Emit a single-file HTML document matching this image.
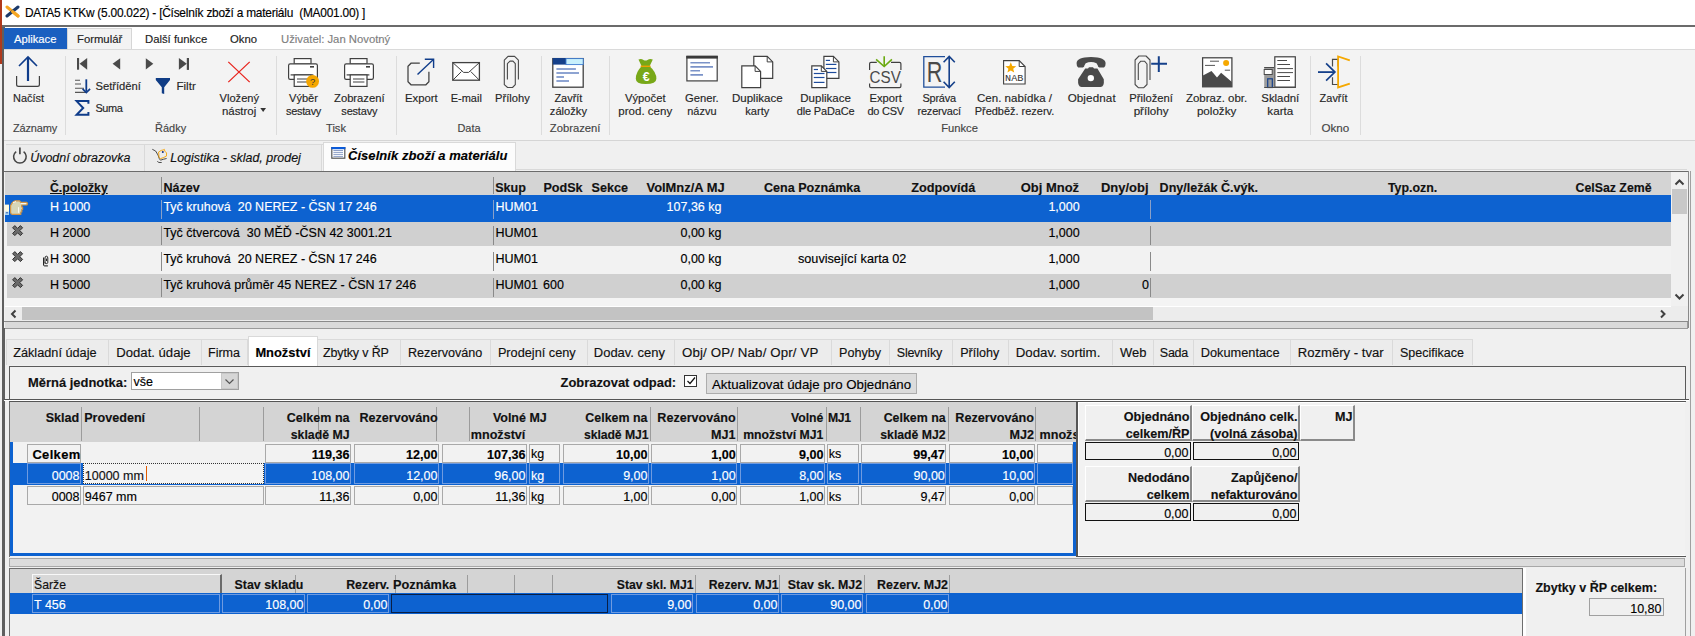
<!DOCTYPE html>
<html><head><meta charset="utf-8"><style>
html,body{margin:0;padding:0;}
body{width:1695px;height:636px;overflow:hidden;position:relative;background:#f0f0f0;font-family:"Liberation Sans",sans-serif;}
.a{position:absolute;}
.t{position:absolute;white-space:pre;-webkit-text-stroke:0.15px currentColor;}
</style></head><body>
<div class="a" style="left:0px;top:0px;width:1695px;height:25px;background:#ffffff;"></div>
<div class="a" style="left:0px;top:0px;width:2px;height:64px;background:#b0391c;"></div>
<div class="t" style="top:3px;font-size:11.9px;line-height:20px;color:#000;left:25px;letter-spacing:-0.230px;">DATA5 KTKw (5.00.022) - [Číselník zboží a materiálu  (MA001.00) ]</div>
<svg class="a" style="left:5px;top:5px" width="15" height="13" viewBox="0 0 15 13"><path d="M2 2 L13 11" stroke="#f5a623" stroke-width="3" stroke-linecap="round"/><path d="M13 2 L2 11" stroke="#1b3a6b" stroke-width="3" stroke-linecap="round"/><path d="M7.5 6.5 L13 11" stroke="#f5a623" stroke-width="3" stroke-linecap="round"/></svg>
<div class="a" style="left:2px;top:25px;width:1693px;height:2px;background:#6b6b6b;"></div>
<div class="a" style="left:2px;top:27px;width:1693px;height:22px;background:#ffffff;"></div>
<div class="a" style="left:2px;top:27px;width:3px;height:609px;background:#5f5f5f;"></div>
<div class="a" style="left:4px;top:28px;width:63px;height:21px;background:#1a5fc0;"></div>
<div class="t" style="top:29px;font-size:11.22px;line-height:20px;color:#ffffff;left:14px;">Aplikace</div>
<div class="a" style="left:67px;top:28px;width:65px;height:22px;background:#f3f3f3;border:1px solid #d6d6d6;border-bottom:none;box-sizing:border-box;"></div>
<div class="t" style="top:29px;font-size:11.3px;line-height:20px;color:#222;left:77px;">Formulář</div>
<div class="t" style="top:29px;font-size:11.3px;line-height:20px;color:#222;left:145px;">Další funkce</div>
<div class="t" style="top:29px;font-size:11.3px;line-height:20px;color:#222;left:230px;">Okno</div>
<div class="t" style="top:29px;font-size:11.3px;line-height:20px;color:#808080;left:281px;">Uživatel: Jan Novotný</div>
<div class="a" style="left:4px;top:49px;width:1691px;height:91px;background:#f3f3f3;"></div>
<div class="a" style="left:4px;top:49px;width:1691px;height:1px;background:#dadada;"></div>
<div class="a" style="left:4px;top:140px;width:1691px;height:1px;background:#d5d5d5;"></div>
<div class="a" style="left:65px;top:56px;width:1px;height:79px;background:#dcdcdc;"></div>
<div class="a" style="left:276px;top:56px;width:1px;height:79px;background:#dcdcdc;"></div>
<div class="a" style="left:396px;top:56px;width:1px;height:79px;background:#dcdcdc;"></div>
<div class="a" style="left:541px;top:56px;width:1px;height:79px;background:#dcdcdc;"></div>
<div class="a" style="left:609px;top:56px;width:1px;height:79px;background:#dcdcdc;"></div>
<div class="a" style="left:1310px;top:56px;width:1px;height:79px;background:#dcdcdc;"></div>
<div class="a" style="left:1360px;top:56px;width:1px;height:79px;background:#dcdcdc;"></div>
<div class="t" style="top:88px;font-size:10.96px;line-height:20px;color:#262626;left:-571.5px;width:1200px;text-align:center;">Načíst</div>
<div class="t" style="top:118px;font-size:10.96px;line-height:20px;color:#444;left:-565px;width:1200px;text-align:center;letter-spacing:-0.152px;">Záznamy</div>
<div class="t" style="top:76px;font-size:11.24px;line-height:20px;color:#262626;left:95.4px;">Setřídění</div>
<div class="t" style="top:98px;font-size:10.96px;line-height:20px;color:#262626;left:95.4px;letter-spacing:-0.406px;">Suma</div>
<div class="t" style="top:76px;font-size:11.64px;line-height:20px;color:#262626;left:176.4px;">Filtr</div>
<div class="t" style="top:88px;font-size:11.13px;line-height:20px;color:#262626;left:-360.7px;width:1200px;text-align:center;">Vložený</div>
<div class="t" style="top:101px;font-size:11.46px;line-height:20px;color:#262626;left:221.9px;">nástroj</div>
<div class="t" style="top:118px;font-size:10.96px;line-height:20px;color:#444;left:-429.4px;width:1200px;text-align:center;">Řádky</div>
<div class="t" style="top:88px;font-size:11.1px;line-height:20px;color:#262626;left:-296.5px;width:1200px;text-align:center;">Výběr</div>
<div class="t" style="top:101px;font-size:10.96px;line-height:20px;color:#262626;left:-296.5px;width:1200px;text-align:center;letter-spacing:-0.310px;">sestavy</div>
<div class="t" style="top:88px;font-size:11.24px;line-height:20px;color:#262626;left:-240.7px;width:1200px;text-align:center;">Zobrazení</div>
<div class="t" style="top:101px;font-size:10.96px;line-height:20px;color:#262626;left:-240.7px;width:1200px;text-align:center;letter-spacing:-0.167px;">sestavy</div>
<div class="t" style="top:118px;font-size:11.13px;line-height:20px;color:#444;left:-264px;width:1200px;text-align:center;">Tisk</div>
<div class="t" style="top:88px;font-size:11.32px;line-height:20px;color:#262626;left:-178.7px;width:1200px;text-align:center;">Export</div>
<div class="t" style="top:88px;font-size:10.96px;line-height:20px;color:#262626;left:-133.7px;width:1200px;text-align:center;">E-mail</div>
<div class="t" style="top:88px;font-size:11.18px;line-height:20px;color:#262626;left:-87.60000000000002px;width:1200px;text-align:center;">Přílohy</div>
<div class="t" style="top:118px;font-size:10.96px;line-height:20px;color:#444;left:-131px;width:1200px;text-align:center;">Data</div>
<div class="t" style="top:88px;font-size:10.96px;line-height:20px;color:#262626;left:-31.600000000000023px;width:1200px;text-align:center;">Zavřít</div>
<div class="t" style="top:101px;font-size:11.15px;line-height:20px;color:#262626;left:-31.600000000000023px;width:1200px;text-align:center;">záložky</div>
<div class="t" style="top:118px;font-size:11.24px;line-height:20px;color:#444;left:-24.899999999999977px;width:1200px;text-align:center;">Zobrazení</div>
<div class="t" style="top:88px;font-size:11.26px;line-height:20px;color:#262626;left:45.299999999999955px;width:1200px;text-align:center;">Výpočet</div>
<div class="t" style="top:101px;font-size:11.54px;line-height:20px;color:#262626;left:45.299999999999955px;width:1200px;text-align:center;">prod. ceny</div>
<div class="t" style="top:88px;font-size:11.23px;line-height:20px;color:#262626;left:101.89999999999998px;width:1200px;text-align:center;">Gener.</div>
<div class="t" style="top:101px;font-size:10.96px;line-height:20px;color:#262626;left:101.89999999999998px;width:1200px;text-align:center;">názvu</div>
<div class="t" style="top:88px;font-size:11.54px;line-height:20px;color:#262626;left:157.29999999999995px;width:1200px;text-align:center;">Duplikace</div>
<div class="t" style="top:101px;font-size:11.12px;line-height:20px;color:#262626;left:157.29999999999995px;width:1200px;text-align:center;">karty</div>
<div class="t" style="top:88px;font-size:11.52px;line-height:20px;color:#262626;left:225.60000000000002px;width:1200px;text-align:center;">Duplikace</div>
<div class="t" style="top:101px;font-size:10.96px;line-height:20px;color:#262626;left:225.60000000000002px;width:1200px;text-align:center;letter-spacing:-0.148px;">dle PaDaCe</div>
<div class="t" style="top:88px;font-size:11.21px;line-height:20px;color:#262626;left:285.70000000000005px;width:1200px;text-align:center;">Export</div>
<div class="t" style="top:101px;font-size:10.96px;line-height:20px;color:#262626;left:285.70000000000005px;width:1200px;text-align:center;letter-spacing:-0.194px;">do CSV</div>
<div class="t" style="top:88px;font-size:10.96px;line-height:20px;color:#262626;left:339.20000000000005px;width:1200px;text-align:center;letter-spacing:-0.220px;">Správa</div>
<div class="t" style="top:101px;font-size:10.96px;line-height:20px;color:#262626;left:339.20000000000005px;width:1200px;text-align:center;letter-spacing:-0.174px;">rezervací</div>
<div class="t" style="top:88px;font-size:11.53px;line-height:20px;color:#262626;left:414.5px;width:1200px;text-align:center;">Cen. nabídka /</div>
<div class="t" style="top:101px;font-size:10.96px;line-height:20px;color:#262626;left:414.5px;width:1200px;text-align:center;">Předběž. rezerv.</div>
<div class="t" style="top:88px;font-size:11.64px;line-height:20px;color:#262626;left:491.70000000000005px;width:1200px;text-align:center;letter-spacing:0.112px;">Objednat</div>
<div class="t" style="top:88px;font-size:11.26px;line-height:20px;color:#262626;left:551.0999999999999px;width:1200px;text-align:center;">Přiložení</div>
<div class="t" style="top:101px;font-size:11.64px;line-height:20px;color:#262626;left:551.0999999999999px;width:1200px;text-align:center;">přílohy</div>
<div class="t" style="top:88px;font-size:11.49px;line-height:20px;color:#262626;left:616.5999999999999px;width:1200px;text-align:center;">Zobraz. obr.</div>
<div class="t" style="top:101px;font-size:11.64px;line-height:20px;color:#262626;left:616.5999999999999px;width:1200px;text-align:center;">položky</div>
<div class="t" style="top:88px;font-size:11.39px;line-height:20px;color:#262626;left:680.3px;width:1200px;text-align:center;">Skladní</div>
<div class="t" style="top:101px;font-size:11.64px;line-height:20px;color:#262626;left:680.3px;width:1200px;text-align:center;">karta</div>
<div class="t" style="top:118px;font-size:11.19px;line-height:20px;color:#444;left:359.6px;width:1200px;text-align:center;">Funkce</div>
<div class="t" style="top:88px;font-size:10.96px;line-height:20px;color:#262626;left:733.5999999999999px;width:1200px;text-align:center;">Zavřít</div>
<div class="t" style="top:118px;font-size:11.64px;line-height:20px;color:#444;left:735.3px;width:1200px;text-align:center;">Okno</div>
<div class="a" style="left:4px;top:141px;width:1691px;height:30px;background:#f0f0f0;"></div>
<div class="a" style="left:6px;top:144px;width:317px;height:1px;background:#d9d9d9;"></div>
<div class="a" style="left:6px;top:145px;width:139px;height:26px;background:#ececec;border-right:1px solid #d9d9d9;box-sizing:border-box;"></div>
<div class="a" style="left:145px;top:145px;width:177px;height:26px;background:#ececec;border-right:1px solid #d9d9d9;box-sizing:border-box;"></div>
<div class="a" style="left:323px;top:142px;width:193px;height:29px;background:#fcfcfc;border:1px solid #d9d9d9;border-bottom:none;box-sizing:border-box;"></div>
<div class="a" style="left:516px;top:169px;width:1171px;height:1px;background:#d9d9d9;"></div>
<div class="t" style="top:148px;font-size:12.45px;line-height:20px;color:#111;font-style:italic;left:30.2px;">Úvodní obrazovka</div>
<div class="t" style="top:148px;font-size:12.43px;line-height:20px;color:#111;font-style:italic;left:170.3px;">Logistika - sklad, prodej</div>
<div class="t" style="top:146px;font-size:12.98px;line-height:20px;color:#000;font-weight:bold;font-style:italic;left:348px;letter-spacing:0.061px;">Číselník zboží a materiálu</div>
<svg class="a" style="left:0px;top:50px" width="60" height="45" viewBox="0 0 60 45"><path d="M28 7 V31" stroke="#0f3c8a" stroke-width="2.2"/><path d="M19 16 L28 7 L37 16" fill="none" stroke="#0f3c8a" stroke-width="1.6"/><path d="M16.6 26 V34.5 Q16.6 36.4 18.5 36.4 H37.5 Q39.4 36.4 39.4 34.5 V26" fill="none" stroke="#404040" stroke-width="1.2"/></svg>
<svg class="a" style="left:70px;top:50px" width="130" height="25" viewBox="0 0 130 25"><rect x="7" y="8" width="2.1" height="11.7" fill="#4a4a4a"/><path d="M17.2 8 L9.6 13.85 L17.2 19.7 Z" fill="#4a4a4a"/><path d="M50.2 8.3 L42.6 13.85 L50.2 19.4 Z" fill="#4a4a4a"/><path d="M75.8 8.3 L83.3 13.85 L75.8 19.4 Z" fill="#4a4a4a"/><path d="M108.9 8 L116.8 13.85 L108.9 19.7 Z" fill="#4a4a4a"/><rect x="116.8" y="8" width="2.2" height="11.9" fill="#4a4a4a"/></svg>
<svg class="a" style="left:70px;top:75px" width="25" height="22" viewBox="0 0 25 22"><path d="M5 5.3 H10 M5 9 H11 M5 13.3 H14 M5 17.4 H16.5" stroke="#555" stroke-width="1.1"/><path d="M16.3 4.3 V16.5" stroke="#0f3c8a" stroke-width="1.8"/><path d="M12.6 13.9 L16.3 17.6 L20.1 13.9" fill="none" stroke="#0f3c8a" stroke-width="1.7"/></svg>
<svg class="a" style="left:150px;top:75px" width="25" height="22" viewBox="0 0 25 22"><path d="M5.8 2.9 H20 V5 L14.2 12.3 V18.9 L11.8 18.3 V12.3 L5.8 5 Z" fill="#0f3c85"/></svg>
<svg class="a" style="left:70px;top:95px" width="25" height="25" viewBox="0 0 25 25"><path d="M18.4 8.8 V6.1 H6.6 L13.2 13 L6.6 19.8 H18.4 V17" fill="none" stroke="#0f3c8a" stroke-width="2" stroke-linejoin="miter"/></svg>
<svg class="a" style="left:220px;top:55px" width="40" height="35" viewBox="0 0 40 35"><path d="M8.3 6.9 L29.7 27.1 M29.7 6.9 L8.3 27.1" stroke="#e8251e" stroke-width="1.3"/></svg>
<svg class="a" style="left:255px;top:104px" width="15" height="12" viewBox="0 0 15 12"><path d="M5.3 4 H11 L8.15 8 Z" fill="#333"/></svg>
<svg class="a" style="left:287px;top:50px" width="36" height="40" viewBox="0 0 36 40"><rect x="7.2" y="8.6" width="16.8" height="5.4" fill="#fff" stroke="#404040" stroke-width="1.2"/><rect x="1.6" y="13.8" width="28.8" height="15.6" rx="1.6" fill="#fff" stroke="#404040" stroke-width="1.2"/><rect x="23" y="16" width="4" height="1.6" fill="#404040"/><path d="M3.6 24.9 H26.4" stroke="#404040" stroke-width="1.2"/><rect x="7.2" y="24.9" width="16.8" height="11.5" fill="#fff" stroke="#404040" stroke-width="1.2"/><path d="M10 29 H21.4 M10 32 H21.4" stroke="#404040" stroke-width="1.1"/><circle cx="25.6" cy="31.4" r="6.4" fill="#f5a600"/><text x="25.6" y="35" font-size="9.5" text-anchor="middle" fill="#3a3a3a" font-family="Liberation Sans">?</text></svg>
<svg class="a" style="left:343px;top:50px" width="36" height="40" viewBox="0 0 36 40"><rect x="7.2" y="8.6" width="16.8" height="5.4" fill="#fff" stroke="#404040" stroke-width="1.2"/><rect x="1.6" y="13.8" width="28.8" height="15.6" rx="1.6" fill="#fff" stroke="#404040" stroke-width="1.2"/><rect x="23" y="16" width="4" height="1.6" fill="#404040"/><path d="M3.6 24.9 H26.4" stroke="#404040" stroke-width="1.2"/><rect x="7.2" y="24.9" width="16.8" height="11.5" fill="#fff" stroke="#404040" stroke-width="1.2"/><path d="M10 29 H21.4 M10 32 H21.4" stroke="#404040" stroke-width="1.1"/></svg>
<svg class="a" style="left:400px;top:50px" width="40" height="40" viewBox="0 0 40 40"><path d="M19.8 13.2 H11 L8 16.2 V31.8 L11 34.8 H25.9 L28.9 31.8 V21.8" fill="none" stroke="#404040" stroke-width="1.25"/><path d="M17.5 24.5 L33.4 9.4" stroke="#0f3c8a" stroke-width="1.4"/><path d="M24.8 9.2 H33.6 V17.9" fill="none" stroke="#0f3c8a" stroke-width="1.4"/></svg>
<svg class="a" style="left:445px;top:55px" width="40" height="32" viewBox="0 0 40 32"><rect x="7.8" y="7.6" width="26.6" height="17.6" fill="#fff" stroke="#404040" stroke-width="1.3"/><path d="M7.8 7.6 L18.6 17.4 H23.6 L34.4 7.6 M7.8 25.2 L16.4 16.6 M34.4 25.2 L25.8 16.6" fill="none" stroke="#404040" stroke-width="1"/></svg>
<svg class="a" style="left:495px;top:50px" width="30" height="42" viewBox="0 0 30 42"><path d="M23.4 29.4 V10.2 L19.6 6.4 H13 L9.3 10.2 V34.7 L12.6 37.5 H17.5 L20.3 34.7 V13.6 L18 11.1 H15 L12.4 13.6 V29.4" fill="none" stroke="#4a4a4a" stroke-width="1.1" stroke-linejoin="round"/></svg>
<svg class="a" style="left:545px;top:50px" width="45" height="42" viewBox="0 0 45 42"><rect x="7.8" y="8.6" width="30.4" height="28.6" fill="#fff" stroke="#404040" stroke-width="1.3"/><rect x="7.8" y="8" width="13.2" height="6.6" fill="#15408a"/><rect x="21" y="8.6" width="17.2" height="6" fill="#c8f0fc" stroke="#3c7ad0" stroke-width="0.9"/><path d="M11.4 18.9 H30.9 M11.4 23 H34 M11.4 26.9 H19 M11.4 30.9 H24" stroke="#6a86c4" stroke-width="1.5"/></svg>
<svg class="a" style="left:630px;top:55px" width="30" height="32" viewBox="0 0 30 32"><path d="M8.5 4.6 Q11 3.2 13.5 5 Q15.5 6 17.5 5 Q20 3.2 22.8 4.6 L19.6 11.2 H11.6 Z" fill="#78a818"/><path d="M11.6 11.2 H19.6 Q26.4 17 26.4 23.8 Q26.4 29 15.6 29 Q5.8 29 5.8 23.8 Q5.8 17 11.6 11.2 Z" fill="#78a818"/><rect x="10.6" y="10.6" width="10" height="1.4" fill="#f0a000"/><text x="16.2" y="25.6" font-size="12.5" font-weight="bold" text-anchor="middle" fill="#fff" font-family="Liberation Sans">€</text></svg>
<svg class="a" style="left:680px;top:50px" width="45" height="35" viewBox="0 0 45 35"><rect x="6.9" y="6.4" width="30.3" height="24.5" fill="#fff" stroke="#404040" stroke-width="1.2"/><rect x="6.3" y="5.8" width="31.5" height="2.8" fill="#3a3a3a"/><path d="M10.4 12.7 H30 M10.4 16.9 H33 M10.4 20.8 H20 M10.4 24.9 H23" stroke="#7b93c8" stroke-width="1.6"/></svg>
<svg class="a" style="left:735px;top:50px" width="45" height="42" viewBox="0 0 45 42"><path d="M18.8 6.4 H32.2 L37.7 11.9 V28.3 H18.8 Z" fill="#fff" stroke="#404040" stroke-width="1.2"/><path d="M32.2 6.4 V11.9 H37.7" fill="none" stroke="#404040" stroke-width="1"/><path d="M6.8 15.9 H20.1 L25.6 21.4 V37.6 H6.8 Z" fill="#fff" stroke="#404040" stroke-width="1.2"/><path d="M20.1 15.9 V21.4 H25.6" fill="none" stroke="#404040" stroke-width="1"/></svg>
<svg class="a" style="left:805px;top:50px" width="40" height="42" viewBox="0 0 40 42"><path d="M18.9 6.4 H28.4 L33.9 11.9 V28.3 H18.9 Z" fill="#fff" stroke="#404040" stroke-width="1.2"/><path d="M28.4 6.4 V11.9 H33.9" fill="none" stroke="#404040" stroke-width="1"/><path d="M20.8 10.4 H25" stroke="#1e4c9c" stroke-width="1.2"/><path d="M20.8 14.4 H31.4" stroke="#1e4c9c" stroke-width="1.2"/><path d="M20.8 18.5 H31.4" stroke="#1e4c9c" stroke-width="1.2"/><path d="M22 22.5 H31.4" stroke="#1e4c9c" stroke-width="1.2"/><path d="M6.8 15.9 H16.3 L21.8 21.4 V37.6 H6.8 Z" fill="#fff" stroke="#404040" stroke-width="1.2"/><path d="M16.3 15.9 V21.4 H21.8" fill="none" stroke="#404040" stroke-width="1"/><path d="M8.8 19.5 H13" stroke="#1e4c9c" stroke-width="1.2"/><path d="M8.8 23.5 H19.5" stroke="#1e4c9c" stroke-width="1.2"/><path d="M8.8 27.5 H19.5" stroke="#1e4c9c" stroke-width="1.2"/><path d="M8.8 32.4 H19.5" stroke="#1e4c9c" stroke-width="1.2"/></svg>
<svg class="a" style="left:865px;top:50px" width="40" height="42" viewBox="0 0 40 42"><path d="M11.8 12.4 H6 Q4.6 12.4 4.6 13.8 V36.3 Q4.6 37.7 6 37.7 H34.5 Q35.9 37.7 35.9 36.3 V13.8 Q35.9 12.4 34.5 12.4 H26" fill="none" stroke="#404040" stroke-width="1.2"/><rect x="3" y="20" width="36" height="13.5" fill="#f3f3f3"/><text x="20.2" y="32.5" font-size="15.6" text-anchor="middle" fill="#4a4a4a" font-family="Liberation Sans" textLength="31.3" lengthAdjust="spacingAndGlyphs">CSV</text><path d="M19.2 6.2 V16.3" stroke="#6aaa10" stroke-width="1.6"/><path d="M11.1 9.3 L19.2 16.5 L26.9 9.3" fill="none" stroke="#6aaa10" stroke-width="1.6"/></svg>
<svg class="a" style="left:918px;top:50px" width="42" height="42" viewBox="0 0 42 42"><path d="M27 6.6 H5.8 V37.1 H27" fill="none" stroke="#1f4e9a" stroke-width="1.3"/><text x="16.6" y="32.4" font-size="30" text-anchor="middle" fill="#4a4a4a" font-family="Liberation Sans" textLength="15.6" lengthAdjust="spacingAndGlyphs">R</text><path d="M31.2 6.6 V37.4 M25.6 12.2 L31.2 6.4 L36.8 12.2 M25.6 31.8 L31.2 37.6 L36.8 31.8" fill="none" stroke="#15408a" stroke-width="1.6"/></svg>
<svg class="a" style="left:998px;top:55px" width="32" height="32" viewBox="0 0 32 32"><path d="M5.6 5.6 H21.2 L27.1 11.5 V29 H5.6 Z" fill="#fff" stroke="#404040" stroke-width="1.1"/><path d="M21.2 5.6 V11.5 H27.1" fill="none" stroke="#404040" stroke-width="1"/><path d="M12.8 7.2 L14.3 11 L18.3 11.2 L15.2 13.7 L16.2 17.6 L12.8 15.4 L9.4 17.6 L10.4 13.7 L7.3 11.2 L11.3 11 Z" fill="#f5a800"/><text x="16.2" y="25.8" font-size="8.6" text-anchor="middle" fill="#333" font-family="Liberation Mono" textLength="18.3" lengthAdjust="spacingAndGlyphs">NAB</text></svg>
<svg class="a" style="left:1070px;top:50px" width="42" height="42" viewBox="0 0 42 42"><path d="M6.6 13.5 Q6.2 7.2 21 6.9 Q35.8 7.2 35.6 13.5 Q35.6 17 34 17.6 H29.3 Q27.8 17 27.8 15.4 L26.5 13.2 Q21 11 15.7 13.2 L14.4 15.4 Q14.4 17 12.9 17.6 H8.2 Q6.6 17 6.6 13.5 Z" fill="#4a4a4a"/><path d="M15.2 18.4 H18 L19 17.2 H23 L24 18.4 H27.4 L33.8 29.3 Q34.5 37 30.5 37 H11.5 Q7.6 37 8.1 29.3 Z" fill="#4a4a4a"/><circle cx="20.8" cy="28.1" r="3.2" fill="#fff"/></svg>
<svg class="a" style="left:1130px;top:50px" width="40" height="42" viewBox="0 0 40 42"><path d="M20 30 V10 L16 6 H9 L5.1 10 V34.5 L8.3 37.7 H13.8 L17 34.5 V14 L14.5 11.2 H10.8 L8.3 14 V30" fill="none" stroke="#4a4a4a" stroke-width="1.1" stroke-linejoin="round"/><path d="M28.8 6.2 V22.1 M21.2 13.8 H37" stroke="#15408a" stroke-width="2"/></svg>
<svg class="a" style="left:1195px;top:50px" width="42" height="42" viewBox="0 0 42 42"><rect x="7.6" y="7.8" width="29.3" height="29" fill="#fff" stroke="#404040" stroke-width="1.25"/><path d="M7 26 L16.5 21 L22 27.4 L26.1 22.8 L36.9 31.9 V37 H7 Z" fill="#4a4a4a"/><circle cx="31.1" cy="13" r="3" fill="#f5a800"/><path d="M15 11.2 H24 M10 15.4 H20 M29.8 20.2 H35.1" stroke="#555" stroke-width="1"/></svg>
<svg class="a" style="left:1260px;top:50px" width="40" height="42" viewBox="0 0 40 42"><rect x="14.8" y="6.8" width="20.5" height="30.3" fill="#fff" stroke="#404040" stroke-width="1.2"/><path d="M17.3 10.5 H27 M17.3 14.5 H30 M17.3 18.6 H33 M17.3 22.6 H33 M17.3 26.5 H30 M17.3 30.5 H30" stroke="#4a4a4a" stroke-width="1"/><rect x="4.2" y="17.1" width="10" height="20.4" fill="#9c9c9c"/><path d="M4.2 17.5 H14.2" stroke="#4a4a4a" stroke-width="1"/><rect x="4.2" y="19.5" width="8" height="5" fill="#fff" stroke="#4a4a4a" stroke-width="1"/><rect x="7.7" y="28.8" width="4.6" height="8.7" fill="#9c9c9c" stroke="#15408a" stroke-width="1.2"/><path d="M4.2 37.5 H35.9" stroke="#4a4a4a" stroke-width="1"/></svg>
<svg class="a" style="left:1310px;top:50px" width="45" height="42" viewBox="0 0 45 42"><path d="M28.1 16.6 V9.3 H28.1 M22.5 16.6 V9.3 H28.1 M22.5 27.2 V34.5 H28.1" fill="none" stroke="#4a4a4a" stroke-width="1.2"/><path d="M39.8 10.3 L28.1 6.4 V37.4 L39.8 33.6" fill="none" stroke="#f5a800" stroke-width="1.8" stroke-linejoin="miter"/><path d="M8 22.1 H24.6" stroke="#15408a" stroke-width="1.8"/><path d="M16.1 13.4 L24.9 22.1 L16.1 30.6" fill="none" stroke="#15408a" stroke-width="1.7"/></svg>
<svg class="a" style="left:10px;top:144px" width="20" height="22" viewBox="0 0 20 22"><path d="M6.2 7.6 A6.3 6.3 0 1 0 13.6 7.6" fill="none" stroke="#444" stroke-width="1.5"/><path d="M9.9 3.4 V10.2" stroke="#444" stroke-width="1.7"/></svg>
<svg class="a" style="left:150px;top:145px" width="20" height="22" viewBox="0 0 20 22"><path d="M2.3 4.3 Q6 4.8 8 10 Q9.5 15 10.5 15.2 Q13 14.2 16.6 13.5" fill="none" stroke="#3a3a3a" stroke-width="0.9"/><path d="M7.3 16.4 Q8.3 18 11.7 17.5" fill="none" stroke="#3a3a3a" stroke-width="0.9"/><path d="M8.6 7 L11.2 5.4 L13.2 5 L14.3 4.3 L14.9 6.2 L16.6 8 L16.4 11.2 L13.2 12.7 L10.6 13.6 L9 12.4 L8.8 9.2 Z" fill="none" stroke="#f5a000" stroke-width="0.9"/><circle cx="12.8" cy="7" r="1" fill="#0f2a80"/></svg>
<svg class="a" style="left:328px;top:144px" width="20" height="18" viewBox="0 0 20 18"><rect x="3.8" y="3.6" width="13" height="10.6" fill="#fff" stroke="#555" stroke-width="1.2"/><rect x="3.2" y="3" width="14.2" height="2.2" fill="#0a5ad8"/><path d="M5.4 6.5 H15 M5.4 8.4 H15 M5.4 10.4 H15 M5.4 12.4 H15" stroke="#8093c0" stroke-width="0.9"/></svg>
<div class="a" style="left:4px;top:171px;width:1685px;height:157px;background:#f2f2f2;"></div>
<div class="a" style="left:4px;top:171px;width:1685px;height:1px;background:#6b6b6b;"></div>
<div class="a" style="left:1688px;top:171px;width:1px;height:157px;background:#8a8a8a;"></div>
<div class="a" style="left:5px;top:172px;width:1666px;height:23px;background:#d4d4d4;"></div>
<div class="a" style="left:161px;top:177px;width:1px;height:17px;background:#8a8a8a;"></div>
<div class="a" style="left:493px;top:177px;width:1px;height:17px;background:#8a8a8a;"></div>
<div class="t" style="top:178px;font-size:12.22px;line-height:20px;color:#111;font-weight:bold;left:50px;text-decoration:underline;">Č.položky</div>
<div class="t" style="top:178px;font-size:12.6px;line-height:20px;color:#111;font-weight:bold;left:163.4px;">Název</div>
<div class="t" style="top:178px;font-size:12.6px;line-height:20px;color:#111;font-weight:bold;left:495.2px;">Skup</div>
<div class="t" style="top:178px;font-size:12.6px;line-height:20px;color:#111;font-weight:bold;left:543.4px;">PodSk</div>
<div class="t" style="top:178px;font-size:12.6px;line-height:20px;color:#111;font-weight:bold;left:591.5px;">Sekce</div>
<div class="t" style="top:178px;font-size:12.92px;line-height:20px;color:#111;font-weight:bold;left:646.5px;">VolMnz/A MJ</div>
<div class="t" style="top:178px;font-size:12.57px;line-height:20px;color:#111;font-weight:bold;left:764px;">Cena Poznámka</div>
<div class="t" style="top:178px;font-size:12.71px;line-height:20px;color:#111;font-weight:bold;left:911.2px;">Zodpovídá</div>
<div class="t" style="top:178px;font-size:12.98px;line-height:20px;color:#111;font-weight:bold;left:1020.7px;">Obj Množ</div>
<div class="t" style="top:178px;font-size:12.98px;line-height:20px;color:#111;font-weight:bold;left:1101px;">Dny/obj</div>
<div class="t" style="top:178px;font-size:12.55px;line-height:20px;color:#111;font-weight:bold;left:1159.6px;">Dny/ležák Č.výk.</div>
<div class="t" style="top:178px;font-size:12.42px;line-height:20px;color:#111;font-weight:bold;left:1387.9px;">Typ.ozn.</div>
<div class="t" style="top:178px;font-size:12.33px;line-height:20px;color:#111;font-weight:bold;left:1575.5px;">CelSaz Země</div>
<div class="a" style="left:5px;top:195px;width:1666px;height:27px;background:#0d62d0;"></div>
<div class="a" style="left:161px;top:200px;width:1px;height:19px;background:#8aa0c8;"></div>
<div class="a" style="left:493px;top:200px;width:1px;height:19px;background:#8aa0c8;"></div>
<div class="a" style="left:1150px;top:200px;width:1px;height:19px;background:#8aa0c8;"></div>
<div class="t" style="top:197px;font-size:12.5px;line-height:20px;color:#fff;left:50px;">H 1000</div>
<div class="t" style="top:197px;font-size:12.5px;line-height:20px;color:#fff;left:163.4px;">Tyč kruhová  20 NEREZ - ČSN 17 246</div>
<div class="t" style="top:197px;font-size:12.54px;line-height:20px;color:#fff;left:495.5px;">HUM01</div>
<div class="t" style="top:197px;font-size:12.5px;line-height:20px;color:#fff;left:-478.5px;width:1200px;text-align:right;">107,36 kg</div>
<div class="t" style="top:197px;font-size:12.5px;line-height:20px;color:#fff;left:-120.29999999999995px;width:1200px;text-align:right;">1,000</div>
<div class="a" style="left:7px;top:222px;width:1664px;height:24px;background:#d0d0d0;"></div>
<div class="a" style="left:161px;top:226px;width:1px;height:19px;background:#8a8a8a;"></div>
<div class="a" style="left:493px;top:226px;width:1px;height:19px;background:#8a8a8a;"></div>
<div class="a" style="left:1150px;top:226px;width:1px;height:19px;background:#8a8a8a;"></div>
<div class="t" style="top:223px;font-size:12.5px;line-height:20px;color:#000;left:50px;">H 2000</div>
<div class="t" style="top:223px;font-size:12.5px;line-height:20px;color:#000;left:163.4px;">Tyč čtvercová  30 MĚĎ -ČSN 42 3001.21</div>
<div class="t" style="top:223px;font-size:12.54px;line-height:20px;color:#000;left:495.5px;">HUM01</div>
<div class="t" style="top:223px;font-size:12.5px;line-height:20px;color:#000;left:-478.5px;width:1200px;text-align:right;">0,00 kg</div>
<div class="t" style="top:223px;font-size:12.5px;line-height:20px;color:#000;left:-120.29999999999995px;width:1200px;text-align:right;">1,000</div>
<div class="a" style="left:7px;top:246px;width:1664px;height:28px;background:#f2f2f2;"></div>
<div class="a" style="left:161px;top:252px;width:1px;height:19px;background:#8a8a8a;"></div>
<div class="a" style="left:493px;top:252px;width:1px;height:19px;background:#8a8a8a;"></div>
<div class="a" style="left:1150px;top:252px;width:1px;height:19px;background:#8a8a8a;"></div>
<div class="t" style="top:249px;font-size:12.5px;line-height:20px;color:#000;left:50px;">H 3000</div>
<div class="t" style="top:249px;font-size:12.5px;line-height:20px;color:#000;left:163.4px;">Tyč kruhová  20 NEREZ - ČSN 17 246</div>
<div class="t" style="top:249px;font-size:12.54px;line-height:20px;color:#000;left:495.5px;">HUM01</div>
<div class="t" style="top:249px;font-size:12.5px;line-height:20px;color:#000;left:-478.5px;width:1200px;text-align:right;">0,00 kg</div>
<div class="t" style="top:249px;font-size:12.67px;line-height:20px;color:#000;left:798px;">související karta 02</div>
<div class="t" style="top:249px;font-size:12.5px;line-height:20px;color:#000;left:-120.29999999999995px;width:1200px;text-align:right;">1,000</div>
<div class="a" style="left:7px;top:274px;width:1664px;height:24px;background:#d0d0d0;"></div>
<div class="a" style="left:161px;top:278px;width:1px;height:19px;background:#8a8a8a;"></div>
<div class="a" style="left:493px;top:278px;width:1px;height:19px;background:#8a8a8a;"></div>
<div class="a" style="left:1150px;top:278px;width:1px;height:19px;background:#8a8a8a;"></div>
<div class="t" style="top:275px;font-size:12.5px;line-height:20px;color:#000;left:50px;">H 5000</div>
<div class="t" style="top:275px;font-size:12.5px;line-height:20px;color:#000;left:163.4px;">Tyč kruhová průměr 45 NEREZ - ČSN 17 246</div>
<div class="t" style="top:275px;font-size:12.54px;line-height:20px;color:#000;left:495.5px;">HUM01</div>
<div class="t" style="top:275px;font-size:12.5px;line-height:20px;color:#000;left:543px;">600</div>
<div class="t" style="top:275px;font-size:12.5px;line-height:20px;color:#000;left:-478.5px;width:1200px;text-align:right;">0,00 kg</div>
<div class="t" style="top:275px;font-size:12.5px;line-height:20px;color:#000;left:-120.29999999999995px;width:1200px;text-align:right;">1,000</div>
<div class="t" style="top:275px;font-size:12.5px;line-height:20px;color:#000;left:-51px;width:1200px;text-align:right;">0</div>
<svg class="a" style="left:3px;top:197px" width="28" height="22" viewBox="0 0 28 22"><rect x="2" y="7.6" width="4" height="10.4" fill="#fffbe0"/><rect x="2" y="14.6" width="4" height="3.4" fill="#a8d4f4"/><circle cx="4" cy="15.8" r="0.8" fill="#3050a0"/><path d="M7.6 8.6 Q9.2 4.6 12.2 3.8 H16.6 L17.8 5.4 H23.8 Q25.2 6.4 23.8 8 H18.6 V10 H19.6 V12.4 H18.8 V15 H17.8 V17.4 H9.4 Q7.6 17.4 7.6 15.6 Z" fill="#d6d6b8" stroke="#d39545" stroke-width="1.2" stroke-linejoin="round"/><path d="M10 5.6 L13 4.6 M17.8 6.6 H23 M15.6 10.2 V15.8" stroke="#ffffff" stroke-width="0.9"/></svg>
<svg class="a" style="left:11px;top:224px" width="14" height="14" viewBox="0 0 14 14"><path d="M1.6 3.8 L3.8 1.6 L6.6 4.4 L9.4 1.6 L11.6 3.8 L8.8 6.6 L11.6 9.4 L9.4 11.6 L6.6 8.8 L3.8 11.6 L1.6 9.4 L4.4 6.6 Z" fill="#6a6a6a" stroke="#303030" stroke-width="1" stroke-linejoin="round"/></svg>
<svg class="a" style="left:11px;top:250px" width="14" height="14" viewBox="0 0 14 14"><path d="M1.6 3.8 L3.8 1.6 L6.6 4.4 L9.4 1.6 L11.6 3.8 L8.8 6.6 L11.6 9.4 L9.4 11.6 L6.6 8.8 L3.8 11.6 L1.6 9.4 L4.4 6.6 Z" fill="#6a6a6a" stroke="#303030" stroke-width="1" stroke-linejoin="round"/></svg>
<svg class="a" style="left:11px;top:276px" width="14" height="14" viewBox="0 0 14 14"><path d="M1.6 3.8 L3.8 1.6 L6.6 4.4 L9.4 1.6 L11.6 3.8 L8.8 6.6 L11.6 9.4 L9.4 11.6 L6.6 8.8 L3.8 11.6 L1.6 9.4 L4.4 6.6 Z" fill="#6a6a6a" stroke="#303030" stroke-width="1" stroke-linejoin="round"/></svg>
<svg class="a" style="left:42px;top:255px" width="8" height="12" viewBox="0 0 8 12"><path d="M1.6 2.5 V10 Q1.6 10.9 2.6 10.9 H5.9" fill="none" stroke="#111" stroke-width="1"/><path d="M3 8.5 V3 Q3 1.2 4.4 1.2 Q5.8 1.2 5.8 3 V7.4 Q5.8 8.6 4.4 8.6 Q3 8.6 3 7.4" fill="none" stroke="#111" stroke-width="0.9"/><rect x="4" y="3.6" width="0.9" height="2.4" fill="#111"/></svg>
<div class="a" style="left:5px;top:298px;width:1666px;height:8px;background:#f4f4f4;"></div>
<div class="a" style="left:5px;top:306px;width:1666px;height:1px;background:#ffffff;"></div>
<div class="a" style="left:5px;top:307px;width:1666px;height:14px;background:#ececec;"></div>
<div class="a" style="left:22px;top:307px;width:1131px;height:13px;background:#c3c3c3;"></div>
<svg class="a" style="left:1658px;top:309px" width="10" height="10" viewBox="0 0 10 10"><path d="M3 1.5 L6.5 5 L3 8.5" fill="none" stroke="#404040" stroke-width="2"/></svg>
<svg class="a" style="left:9px;top:309px" width="10" height="10" viewBox="0 0 10 10"><path d="M6.5 1.5 L3 5 L6.5 8.5" fill="none" stroke="#404040" stroke-width="2"/></svg>
<div class="a" style="left:1671px;top:172px;width:17px;height:134px;background:#f0f0f0;"></div>
<div class="a" style="left:1672px;top:189px;width:15px;height:25px;background:#c8c8c8;"></div>
<svg class="a" style="left:1674px;top:178px" width="11" height="8" viewBox="0 0 11 8"><path d="M1.5 6.5 L5.5 2.5 L9.5 6.5" fill="none" stroke="#404040" stroke-width="2"/></svg>
<svg class="a" style="left:1674px;top:293px" width="11" height="8" viewBox="0 0 11 8"><path d="M1.5 1.5 L5.5 5.5 L9.5 1.5" fill="none" stroke="#404040" stroke-width="2"/></svg>
<div class="a" style="left:1671px;top:306px;width:17px;height:15px;background:#ececec;"></div>
<div class="a" style="left:4px;top:321px;width:1685px;height:1px;background:#8a8a8a;"></div>
<div class="a" style="left:5px;top:322px;width:1683px;height:7px;background:#dadada;border-bottom:1px solid #9a9a9a;border-right:1px solid #9a9a9a;box-sizing:border-box;"></div>
<div class="a" style="left:7px;top:339px;width:102px;height:26px;background:#ececec;border:1px solid #dadada;border-left:none;border-bottom:none;box-sizing:border-box;"></div>
<div class="t" style="top:343px;font-size:12.71px;line-height:20px;color:#111;left:13.2px;">Základní údaje</div>
<div class="a" style="left:109px;top:339px;width:93px;height:26px;background:#ececec;border:1px solid #dadada;border-left:none;border-bottom:none;box-sizing:border-box;"></div>
<div class="t" style="top:343px;font-size:13.11px;line-height:20px;color:#111;left:116.3px;">Dodat. údaje</div>
<div class="a" style="left:202px;top:339px;width:46px;height:26px;background:#ececec;border:1px solid #dadada;border-left:none;border-bottom:none;box-sizing:border-box;"></div>
<div class="t" style="top:343px;font-size:12.51px;line-height:20px;color:#111;left:208px;">Firma</div>
<div class="a" style="left:248px;top:336px;width:70px;height:30px;background:#ffffff;border:1px solid #d9d9d9;border-bottom:none;box-sizing:border-box;"></div>
<div class="t" style="top:343px;font-size:12.89px;line-height:20px;color:#000;font-weight:bold;left:255.4px;">Množství</div>
<div class="a" style="left:318px;top:339px;width:83px;height:26px;background:#ececec;border:1px solid #dadada;border-left:none;border-bottom:none;box-sizing:border-box;"></div>
<div class="t" style="top:343px;font-size:12.51px;line-height:20px;color:#111;left:323px;letter-spacing:-0.143px;">Zbytky v ŘP</div>
<div class="a" style="left:401px;top:339px;width:90px;height:26px;background:#ececec;border:1px solid #dadada;border-left:none;border-bottom:none;box-sizing:border-box;"></div>
<div class="t" style="top:343px;font-size:12.61px;line-height:20px;color:#111;left:408px;">Rezervováno</div>
<div class="a" style="left:491px;top:339px;width:97px;height:26px;background:#ececec;border:1px solid #dadada;border-left:none;border-bottom:none;box-sizing:border-box;"></div>
<div class="t" style="top:343px;font-size:12.73px;line-height:20px;color:#111;left:497.9px;">Prodejní ceny</div>
<div class="a" style="left:588px;top:339px;width:87px;height:26px;background:#ececec;border:1px solid #dadada;border-left:none;border-bottom:none;box-sizing:border-box;"></div>
<div class="t" style="top:343px;font-size:12.97px;line-height:20px;color:#111;left:593.8px;">Dodav. ceny</div>
<div class="a" style="left:675px;top:339px;width:157px;height:26px;background:#ececec;border:1px solid #dadada;border-left:none;border-bottom:none;box-sizing:border-box;"></div>
<div class="t" style="top:343px;font-size:13.29px;line-height:20px;color:#111;left:682px;letter-spacing:0.138px;">Obj/ OP/ Nab/ Opr/ VP</div>
<div class="a" style="left:832px;top:339px;width:58px;height:26px;background:#ececec;border:1px solid #dadada;border-left:none;border-bottom:none;box-sizing:border-box;"></div>
<div class="t" style="top:343px;font-size:12.6px;line-height:20px;color:#111;left:839px;">Pohyby</div>
<div class="a" style="left:890px;top:339px;width:63px;height:26px;background:#ececec;border:1px solid #dadada;border-left:none;border-bottom:none;box-sizing:border-box;"></div>
<div class="t" style="top:343px;font-size:12.51px;line-height:20px;color:#111;left:896.8px;letter-spacing:-0.256px;">Slevníky</div>
<div class="a" style="left:953px;top:339px;width:56px;height:26px;background:#ececec;border:1px solid #dadada;border-left:none;border-bottom:none;box-sizing:border-box;"></div>
<div class="t" style="top:343px;font-size:12.54px;line-height:20px;color:#111;left:960.2px;">Přílohy</div>
<div class="a" style="left:1009px;top:339px;width:104px;height:26px;background:#ececec;border:1px solid #dadada;border-left:none;border-bottom:none;box-sizing:border-box;"></div>
<div class="t" style="top:343px;font-size:13.29px;line-height:20px;color:#111;left:1015.7px;">Dodav. sortim.</div>
<div class="a" style="left:1113px;top:339px;width:41px;height:26px;background:#ececec;border:1px solid #dadada;border-left:none;border-bottom:none;box-sizing:border-box;"></div>
<div class="t" style="top:343px;font-size:12.96px;line-height:20px;color:#111;left:1120px;">Web</div>
<div class="a" style="left:1154px;top:339px;width:40px;height:26px;background:#ececec;border:1px solid #dadada;border-left:none;border-bottom:none;box-sizing:border-box;"></div>
<div class="t" style="top:343px;font-size:12.51px;line-height:20px;color:#111;left:1159.8px;letter-spacing:-0.251px;">Sada</div>
<div class="a" style="left:1194px;top:339px;width:97px;height:26px;background:#ececec;border:1px solid #dadada;border-left:none;border-bottom:none;box-sizing:border-box;"></div>
<div class="t" style="top:343px;font-size:12.78px;line-height:20px;color:#111;left:1200.8px;">Dokumentace</div>
<div class="a" style="left:1291px;top:339px;width:102px;height:26px;background:#ececec;border:1px solid #dadada;border-left:none;border-bottom:none;box-sizing:border-box;"></div>
<div class="t" style="top:343px;font-size:13.12px;line-height:20px;color:#111;left:1297.7px;">Rozměry - tvar</div>
<div class="a" style="left:1393px;top:339px;width:80px;height:26px;background:#ececec;border:1px solid #dadada;border-left:none;border-bottom:none;box-sizing:border-box;"></div>
<div class="t" style="top:343px;font-size:12.51px;line-height:20px;color:#111;left:1400px;">Specifikace</div>
<div class="a" style="left:6px;top:339px;width:1px;height:26px;background:#dadada;"></div>
<div class="a" style="left:9px;top:366px;width:1677px;height:34px;background:#f0f0f0;border:1px solid #5a5a5a;box-sizing:border-box;"></div>
<div class="t" style="top:373px;font-size:12.94px;line-height:20px;color:#111;font-weight:bold;left:28px;">Měrná jednotka:</div>
<div class="a" style="left:131px;top:372px;width:108px;height:18px;background:#ffffff;border:1px solid #a0a0a0;box-sizing:border-box;"></div>
<div class="t" style="top:372px;font-size:12.5px;line-height:20px;color:#000;left:133.5px;">vše</div>
<div class="a" style="left:221px;top:373px;width:17px;height:16px;background:#d6d6d6;border:1px solid #c8c8c8;box-sizing:border-box;"></div>
<svg class="a" style="left:224px;top:378px" width="11" height="7" viewBox="0 0 11 7"><path d="M1.5 1.5 L5.5 5.5 L9.5 1.5" fill="none" stroke="#555" stroke-width="1.2"/></svg>
<div class="t" style="top:373px;font-size:12.93px;line-height:20px;color:#111;font-weight:bold;left:560.5px;">Zobrazovat odpad:</div>
<div class="a" style="left:684px;top:375px;width:13px;height:12px;background:#fff;border:1px solid #333;box-sizing:border-box;"></div>
<svg class="a" style="left:685px;top:375px" width="12" height="12" viewBox="0 0 12 12"><path d="M2.5 6 L5 8.5 L10 2.5" fill="none" stroke="#111" stroke-width="1.2"/></svg>
<div class="a" style="left:706px;top:373px;width:211px;height:21px;background:#dcdcdc;border:1px solid #adadad;box-sizing:border-box;"></div>
<div class="t" style="top:375px;font-size:13.27px;line-height:20px;color:#000;left:712px;">Aktualizovat údaje pro Objednáno</div>
<div class="a" style="left:4px;top:399px;width:1685px;height:1px;background:#555555;"></div>
<div class="a" style="left:4px;top:400px;width:1685px;height:1px;background:#ffffff;"></div>
<div class="a" style="left:9px;top:401px;width:1069px;height:156px;background:#f2f2f2;"></div>
<div class="a" style="left:9px;top:401px;width:1px;height:156px;background:#6e6e6e;"></div>
<div class="a" style="left:9px;top:401px;width:1677px;height:1px;background:#555555;"></div>
<div class="a" style="left:10px;top:402px;width:1066px;height:40px;background:#d4d4d4;"></div>
<div class="a" style="left:10px;top:442px;width:3px;height:114px;background:#0d62d0;"></div>
<div class="a" style="left:10px;top:553px;width:1066px;height:3px;background:#0d62d0;"></div>
<div class="a" style="left:1073px;top:442px;width:3px;height:114px;background:#0d62d0;"></div>
<div class="a" style="left:81px;top:407px;width:1px;height:34px;background:#9c9c9c;"></div>
<div class="a" style="left:199px;top:407px;width:1px;height:34px;background:#9c9c9c;"></div>
<div class="a" style="left:263px;top:407px;width:1px;height:34px;background:#9c9c9c;"></div>
<div class="a" style="left:318px;top:407px;width:1px;height:34px;background:#9c9c9c;"></div>
<div class="a" style="left:436px;top:407px;width:1px;height:34px;background:#9c9c9c;"></div>
<div class="a" style="left:469px;top:407px;width:1px;height:34px;background:#9c9c9c;"></div>
<div class="a" style="left:650px;top:407px;width:1px;height:34px;background:#9c9c9c;"></div>
<div class="a" style="left:737px;top:407px;width:1px;height:34px;background:#9c9c9c;"></div>
<div class="a" style="left:826px;top:407px;width:1px;height:34px;background:#9c9c9c;"></div>
<div class="a" style="left:860px;top:407px;width:1px;height:34px;background:#9c9c9c;"></div>
<div class="a" style="left:948px;top:407px;width:1px;height:34px;background:#9c9c9c;"></div>
<div class="a" style="left:1035px;top:407px;width:1px;height:34px;background:#9c9c9c;"></div>
<div class="t" style="top:408px;font-size:12.6px;line-height:20px;color:#111;font-weight:bold;left:-1120.7px;width:1200px;text-align:right;">Sklad</div>
<div class="t" style="top:408px;font-size:12.6px;line-height:20px;color:#111;font-weight:bold;left:84.2px;">Provedení</div>
<div class="t" style="top:408px;font-size:12.54px;line-height:20px;color:#111;font-weight:bold;left:-850.5px;width:1200px;text-align:right;">Celkem na</div>
<div class="t" style="top:425px;font-size:12.31px;line-height:20px;color:#111;font-weight:bold;left:-850.5px;width:1200px;text-align:right;">skladě MJ</div>
<div class="t" style="top:408px;font-size:12.59px;line-height:20px;color:#111;font-weight:bold;left:359.4px;">Rezervováno</div>
<div class="t" style="top:408px;font-size:12.48px;line-height:20px;color:#111;font-weight:bold;left:-653.3px;width:1200px;text-align:right;">Volné MJ</div>
<div class="t" style="top:425px;font-size:12.59px;line-height:20px;color:#111;font-weight:bold;left:470.8px;">množství</div>
<div class="t" style="top:408px;font-size:12.42px;line-height:20px;color:#111;font-weight:bold;left:-552.6px;width:1200px;text-align:right;">Celkem na</div>
<div class="t" style="top:425px;font-size:12.22px;line-height:20px;color:#111;font-weight:bold;left:-551.6px;width:1200px;text-align:right;letter-spacing:-0.080px;">skladě MJ1</div>
<div class="t" style="top:408px;font-size:12.59px;line-height:20px;color:#111;font-weight:bold;left:657.3px;">Rezervováno</div>
<div class="t" style="top:425px;font-size:12.6px;line-height:20px;color:#111;font-weight:bold;left:-464.4px;width:1200px;text-align:right;">MJ1</div>
<div class="t" style="top:408px;font-size:12.24px;line-height:20px;color:#111;font-weight:bold;left:-376.6px;width:1200px;text-align:right;">Volné</div>
<div class="t" style="top:425px;font-size:12.24px;line-height:20px;color:#111;font-weight:bold;left:-376.6px;width:1200px;text-align:right;">množství MJ1</div>
<div class="t" style="top:408px;font-size:12.22px;line-height:20px;color:#111;font-weight:bold;left:828px;letter-spacing:-0.422px;">MJ1</div>
<div class="t" style="top:408px;font-size:12.42px;line-height:20px;color:#111;font-weight:bold;left:-254.29999999999995px;width:1200px;text-align:right;">Celkem na</div>
<div class="t" style="top:425px;font-size:12.27px;line-height:20px;color:#111;font-weight:bold;left:-254.29999999999995px;width:1200px;text-align:right;">skladě MJ2</div>
<div class="t" style="top:408px;font-size:12.64px;line-height:20px;color:#111;font-weight:bold;left:955.3px;">Rezervováno</div>
<div class="t" style="top:425px;font-size:12.6px;line-height:20px;color:#111;font-weight:bold;left:-166.0999999999999px;width:1200px;text-align:right;">MJ2</div>
<div class="a" style="left:1039px;top:420px;width:37px;height:22px;overflow:hidden"><div class="t" style="left:0.5px;top:7.5px;font-size:12.6px;line-height:14px;font-weight:bold;color:#111">množství</div></div>
<div class="a" style="left:27px;top:444px;width:54px;height:19px;border:1px solid #a9a9a9;box-sizing:border-box;"></div>
<div class="t" style="top:445px;font-size:12.98px;line-height:20px;color:#000;font-weight:bold;left:32.4px;letter-spacing:0.341px;">Celkem</div>
<div class="a" style="left:265px;top:444px;width:86px;height:19px;border:1px solid #a9a9a9;box-sizing:border-box;"></div>
<div class="t" style="top:445px;font-size:12.6px;line-height:20px;color:#000;font-weight:bold;left:-850.5px;width:1200px;text-align:right;">119,36</div>
<div class="a" style="left:354px;top:444px;width:85px;height:19px;border:1px solid #a9a9a9;box-sizing:border-box;"></div>
<div class="t" style="top:445px;font-size:12.6px;line-height:20px;color:#000;font-weight:bold;left:-762.5px;width:1200px;text-align:right;">12,00</div>
<div class="a" style="left:442px;top:444px;width:85px;height:19px;border:1px solid #a9a9a9;box-sizing:border-box;"></div>
<div class="t" style="top:445px;font-size:12.6px;line-height:20px;color:#000;font-weight:bold;left:-674.5px;width:1200px;text-align:right;">107,36</div>
<div class="a" style="left:529px;top:444px;width:31px;height:19px;border:1px solid #a9a9a9;box-sizing:border-box;"></div>
<div class="t" style="top:444px;font-size:12.5px;line-height:20px;color:#000;left:531px;">kg</div>
<div class="a" style="left:563px;top:444px;width:86px;height:19px;border:1px solid #a9a9a9;box-sizing:border-box;"></div>
<div class="t" style="top:445px;font-size:12.6px;line-height:20px;color:#000;font-weight:bold;left:-552.5px;width:1200px;text-align:right;">10,00</div>
<div class="a" style="left:651px;top:444px;width:86px;height:19px;border:1px solid #a9a9a9;box-sizing:border-box;"></div>
<div class="t" style="top:445px;font-size:12.6px;line-height:20px;color:#000;font-weight:bold;left:-464.29999999999995px;width:1200px;text-align:right;">1,00</div>
<div class="a" style="left:740px;top:444px;width:85px;height:19px;border:1px solid #a9a9a9;box-sizing:border-box;"></div>
<div class="t" style="top:445px;font-size:12.6px;line-height:20px;color:#000;font-weight:bold;left:-376.5px;width:1200px;text-align:right;">9,00</div>
<div class="a" style="left:827px;top:444px;width:32px;height:19px;border:1px solid #a9a9a9;box-sizing:border-box;"></div>
<div class="t" style="top:444px;font-size:12.5px;line-height:20px;color:#000;left:828.8px;">ks</div>
<div class="a" style="left:861px;top:444px;width:85px;height:19px;border:1px solid #a9a9a9;box-sizing:border-box;"></div>
<div class="t" style="top:445px;font-size:12.6px;line-height:20px;color:#000;font-weight:bold;left:-255.20000000000005px;width:1200px;text-align:right;">99,47</div>
<div class="a" style="left:949px;top:444px;width:86px;height:19px;border:1px solid #a9a9a9;box-sizing:border-box;"></div>
<div class="t" style="top:445px;font-size:12.6px;line-height:20px;color:#000;font-weight:bold;left:-166.5px;width:1200px;text-align:right;">10,00</div>
<div class="a" style="left:1037px;top:444px;width:36px;height:19px;border:1px solid #a9a9a9;box-sizing:border-box;"></div>
<div class="a" style="left:13px;top:463px;width:1060px;height:22px;background:#0d62d0;"></div>
<div class="a" style="left:27px;top:463px;width:54px;height:21px;border:1px solid #6f9be0;box-sizing:border-box;"></div>
<div class="t" style="top:466px;font-size:12.5px;line-height:20px;color:#fff;left:-1120.5px;width:1200px;text-align:right;">0008</div>
<div class="a" style="left:83px;top:463px;width:181px;height:21px;background:#f4f4f4;border:1px dotted #333;box-sizing:border-box;"></div>
<div class="t" style="top:466px;font-size:12.5px;line-height:20px;color:#111;left:84.8px;">10000 mm</div>
<div class="a" style="left:146px;top:466px;width:1px;height:15px;background:#e05a00;"></div>
<div class="a" style="left:265px;top:463px;width:86px;height:21px;border:1px solid #6f9be0;box-sizing:border-box;"></div>
<div class="t" style="top:466px;font-size:12.5px;line-height:20px;color:#fff;left:-850.5px;width:1200px;text-align:right;">108,00</div>
<div class="a" style="left:354px;top:463px;width:85px;height:21px;border:1px solid #6f9be0;box-sizing:border-box;"></div>
<div class="t" style="top:466px;font-size:12.5px;line-height:20px;color:#fff;left:-762.5px;width:1200px;text-align:right;">12,00</div>
<div class="a" style="left:442px;top:463px;width:85px;height:21px;border:1px solid #6f9be0;box-sizing:border-box;"></div>
<div class="t" style="top:466px;font-size:12.5px;line-height:20px;color:#fff;left:-674.5px;width:1200px;text-align:right;">96,00</div>
<div class="a" style="left:529px;top:463px;width:31px;height:21px;border:1px solid #6f9be0;box-sizing:border-box;"></div>
<div class="t" style="top:466px;font-size:12.5px;line-height:20px;color:#fff;left:531px;">kg</div>
<div class="a" style="left:563px;top:463px;width:86px;height:21px;border:1px solid #6f9be0;box-sizing:border-box;"></div>
<div class="t" style="top:466px;font-size:12.5px;line-height:20px;color:#fff;left:-552.5px;width:1200px;text-align:right;">9,00</div>
<div class="a" style="left:651px;top:463px;width:86px;height:21px;border:1px solid #6f9be0;box-sizing:border-box;"></div>
<div class="t" style="top:466px;font-size:12.5px;line-height:20px;color:#fff;left:-464.29999999999995px;width:1200px;text-align:right;">1,00</div>
<div class="a" style="left:740px;top:463px;width:85px;height:21px;border:1px solid #6f9be0;box-sizing:border-box;"></div>
<div class="t" style="top:466px;font-size:12.5px;line-height:20px;color:#fff;left:-376.5px;width:1200px;text-align:right;">8,00</div>
<div class="a" style="left:827px;top:463px;width:32px;height:21px;border:1px solid #6f9be0;box-sizing:border-box;"></div>
<div class="t" style="top:466px;font-size:12.5px;line-height:20px;color:#fff;left:828.8px;">ks</div>
<div class="a" style="left:861px;top:463px;width:85px;height:21px;border:1px solid #6f9be0;box-sizing:border-box;"></div>
<div class="t" style="top:466px;font-size:12.5px;line-height:20px;color:#fff;left:-255.20000000000005px;width:1200px;text-align:right;">90,00</div>
<div class="a" style="left:949px;top:463px;width:86px;height:21px;border:1px solid #6f9be0;box-sizing:border-box;"></div>
<div class="t" style="top:466px;font-size:12.5px;line-height:20px;color:#fff;left:-166.5px;width:1200px;text-align:right;">10,00</div>
<div class="a" style="left:1037px;top:463px;width:36px;height:21px;border:1px solid #6f9be0;box-sizing:border-box;"></div>
<div class="a" style="left:27px;top:486px;width:54px;height:19px;border:1px solid #a9a9a9;box-sizing:border-box;"></div>
<div class="t" style="top:487px;font-size:12.5px;line-height:20px;color:#000;left:-1120.5px;width:1200px;text-align:right;">0008</div>
<div class="a" style="left:83px;top:486px;width:181px;height:19px;border:1px solid #a9a9a9;box-sizing:border-box;"></div>
<div class="t" style="top:487px;font-size:12.5px;line-height:20px;color:#000;left:84.8px;">9467 mm</div>
<div class="a" style="left:265px;top:486px;width:86px;height:19px;border:1px solid #a9a9a9;box-sizing:border-box;"></div>
<div class="t" style="top:487px;font-size:12.5px;line-height:20px;color:#000;left:-850.5px;width:1200px;text-align:right;">11,36</div>
<div class="a" style="left:354px;top:486px;width:85px;height:19px;border:1px solid #a9a9a9;box-sizing:border-box;"></div>
<div class="t" style="top:487px;font-size:12.5px;line-height:20px;color:#000;left:-762.5px;width:1200px;text-align:right;">0,00</div>
<div class="a" style="left:442px;top:486px;width:85px;height:19px;border:1px solid #a9a9a9;box-sizing:border-box;"></div>
<div class="t" style="top:487px;font-size:12.5px;line-height:20px;color:#000;left:-674.5px;width:1200px;text-align:right;">11,36</div>
<div class="a" style="left:529px;top:486px;width:31px;height:19px;border:1px solid #a9a9a9;box-sizing:border-box;"></div>
<div class="t" style="top:487px;font-size:12.5px;line-height:20px;color:#000;left:531px;">kg</div>
<div class="a" style="left:563px;top:486px;width:86px;height:19px;border:1px solid #a9a9a9;box-sizing:border-box;"></div>
<div class="t" style="top:487px;font-size:12.5px;line-height:20px;color:#000;left:-552.5px;width:1200px;text-align:right;">1,00</div>
<div class="a" style="left:651px;top:486px;width:86px;height:19px;border:1px solid #a9a9a9;box-sizing:border-box;"></div>
<div class="t" style="top:487px;font-size:12.5px;line-height:20px;color:#000;left:-464.29999999999995px;width:1200px;text-align:right;">0,00</div>
<div class="a" style="left:740px;top:486px;width:85px;height:19px;border:1px solid #a9a9a9;box-sizing:border-box;"></div>
<div class="t" style="top:487px;font-size:12.5px;line-height:20px;color:#000;left:-376.5px;width:1200px;text-align:right;">1,00</div>
<div class="a" style="left:827px;top:486px;width:32px;height:19px;border:1px solid #a9a9a9;box-sizing:border-box;"></div>
<div class="t" style="top:487px;font-size:12.5px;line-height:20px;color:#000;left:828.8px;">ks</div>
<div class="a" style="left:861px;top:486px;width:85px;height:19px;border:1px solid #a9a9a9;box-sizing:border-box;"></div>
<div class="t" style="top:487px;font-size:12.5px;line-height:20px;color:#000;left:-255.20000000000005px;width:1200px;text-align:right;">9,47</div>
<div class="a" style="left:949px;top:486px;width:86px;height:19px;border:1px solid #a9a9a9;box-sizing:border-box;"></div>
<div class="t" style="top:487px;font-size:12.5px;line-height:20px;color:#000;left:-166.5px;width:1200px;text-align:right;">0,00</div>
<div class="a" style="left:1037px;top:486px;width:36px;height:19px;border:1px solid #a9a9a9;box-sizing:border-box;"></div>
<div class="a" style="left:1078px;top:402px;width:607px;height:154px;background:#f2f2f2;"></div>
<div class="a" style="left:1078px;top:402px;width:1px;height:154px;background:#ffffff;"></div>
<div class="a" style="left:1078px;top:402px;width:607px;height:1px;background:#ffffff;"></div>
<div class="a" style="left:1078px;top:555px;width:607px;height:1px;background:#ffffff;"></div>
<div class="a" style="left:1076px;top:401px;width:2px;height:156px;background:#555555;"></div>
<div class="a" style="left:1076px;top:556px;width:610px;height:1px;background:#555555;"></div>
<div class="a" style="left:1085px;top:405px;width:107px;height:36px;background:#f0f0f0;border-style:solid;border-width:1px 2px 2px 1px;border-color:#ffffff #8a8a8a #8a8a8a #ffffff;box-sizing:border-box;"></div>
<div class="t" style="top:407px;font-size:12.6px;line-height:20px;color:#111;font-weight:bold;left:-10.5px;width:1200px;text-align:right;">Objednáno</div>
<div class="t" style="top:424px;font-size:12.6px;line-height:20px;color:#111;font-weight:bold;left:-10.5px;width:1200px;text-align:right;">celkem/ŘP</div>
<div class="a" style="left:1192px;top:405px;width:108px;height:36px;background:#f0f0f0;border-style:solid;border-width:1px 2px 2px 1px;border-color:#ffffff #8a8a8a #8a8a8a #ffffff;box-sizing:border-box;"></div>
<div class="t" style="top:407px;font-size:12.6px;line-height:20px;color:#111;font-weight:bold;left:97.5px;width:1200px;text-align:right;">Objednáno celk.</div>
<div class="t" style="top:424px;font-size:12.6px;line-height:20px;color:#111;font-weight:bold;left:97.5px;width:1200px;text-align:right;">(volná zásoba)</div>
<div class="a" style="left:1300px;top:405px;width:55px;height:36px;background:#f0f0f0;border-style:solid;border-width:1px 2px 2px 1px;border-color:#ffffff #8a8a8a #8a8a8a #ffffff;box-sizing:border-box;"></div>
<div class="t" style="top:407px;font-size:12.6px;line-height:20px;color:#111;font-weight:bold;left:152.5px;width:1200px;text-align:right;">MJ</div>
<div class="a" style="left:1085px;top:442px;width:106px;height:18px;background:#f0f0f0;border:1px solid #111;box-sizing:border-box;"></div>
<div class="t" style="top:443px;font-size:12.5px;line-height:20px;color:#000;left:-11.5px;width:1200px;text-align:right;">0,00</div>
<div class="a" style="left:1193px;top:442px;width:106px;height:18px;background:#f0f0f0;border:1px solid #111;box-sizing:border-box;"></div>
<div class="t" style="top:443px;font-size:12.5px;line-height:20px;color:#000;left:96.5px;width:1200px;text-align:right;">0,00</div>
<div class="a" style="left:1085px;top:466px;width:107px;height:36px;background:#f0f0f0;border-style:solid;border-width:1px 2px 2px 1px;border-color:#ffffff #8a8a8a #8a8a8a #ffffff;box-sizing:border-box;"></div>
<div class="t" style="top:468px;font-size:12.6px;line-height:20px;color:#111;font-weight:bold;left:-10.5px;width:1200px;text-align:right;">Nedodáno</div>
<div class="t" style="top:485px;font-size:12.6px;line-height:20px;color:#111;font-weight:bold;left:-10.5px;width:1200px;text-align:right;">celkem</div>
<div class="a" style="left:1192px;top:466px;width:108px;height:36px;background:#f0f0f0;border-style:solid;border-width:1px 2px 2px 1px;border-color:#ffffff #8a8a8a #8a8a8a #ffffff;box-sizing:border-box;"></div>
<div class="t" style="top:468px;font-size:12.6px;line-height:20px;color:#111;font-weight:bold;left:97.5px;width:1200px;text-align:right;">Zapůjčeno/</div>
<div class="t" style="top:485px;font-size:12.6px;line-height:20px;color:#111;font-weight:bold;left:97.5px;width:1200px;text-align:right;">nefakturováno</div>
<div class="a" style="left:1085px;top:503px;width:106px;height:18px;background:#f0f0f0;border:1px solid #111;box-sizing:border-box;"></div>
<div class="t" style="top:504px;font-size:12.5px;line-height:20px;color:#000;left:-11.5px;width:1200px;text-align:right;">0,00</div>
<div class="a" style="left:1193px;top:503px;width:106px;height:18px;background:#f0f0f0;border:1px solid #111;box-sizing:border-box;"></div>
<div class="t" style="top:504px;font-size:12.5px;line-height:20px;color:#000;left:96.5px;width:1200px;text-align:right;">0,00</div>
<div class="a" style="left:9px;top:557px;width:1680px;height:79px;background:#f0f0f0;"></div>
<div class="a" style="left:9px;top:558px;width:1676px;height:9px;background:#dcdcdc;border:1px solid #a8a8a8;box-sizing:border-box;"></div>
<div class="a" style="left:9px;top:568px;width:1514px;height:1px;background:#6e6e6e;"></div>
<div class="a" style="left:9px;top:568px;width:1px;height:68px;background:#6e6e6e;"></div>
<div class="a" style="left:10px;top:569px;width:1512px;height:24px;background:#d4d4d4;"></div>
<div class="a" style="left:32px;top:574px;width:190px;height:19px;background:#d8d8d8;border-style:solid;border-width:1px 2px 0 1px;border-color:#f8f8f8 #6a6a6a #f8f8f8 #f8f8f8;box-sizing:border-box;"></div>
<div class="a" style="left:295px;top:575px;width:1px;height:18px;background:#9c9c9c;"></div>
<div class="a" style="left:395px;top:575px;width:1px;height:18px;background:#9c9c9c;"></div>
<div class="a" style="left:467px;top:575px;width:1px;height:18px;background:#9c9c9c;"></div>
<div class="a" style="left:514px;top:575px;width:1px;height:18px;background:#9c9c9c;"></div>
<div class="a" style="left:552px;top:575px;width:1px;height:18px;background:#9c9c9c;"></div>
<div class="a" style="left:695px;top:575px;width:1px;height:18px;background:#9c9c9c;"></div>
<div class="a" style="left:779px;top:575px;width:1px;height:18px;background:#9c9c9c;"></div>
<div class="a" style="left:864px;top:575px;width:1px;height:18px;background:#9c9c9c;"></div>
<div class="a" style="left:949px;top:575px;width:1px;height:18px;background:#9c9c9c;"></div>
<div class="t" style="top:575px;font-size:12.26px;line-height:20px;color:#111;left:34px;">Šarže</div>
<div class="t" style="top:575px;font-size:12.37px;line-height:20px;color:#111;font-weight:bold;left:234.6px;">Stav skladu</div>
<div class="t" style="top:575px;font-size:12.35px;line-height:20px;color:#111;font-weight:bold;left:-810.8px;width:1200px;text-align:right;">Rezerv.</div>
<div class="t" style="top:575px;font-size:12.75px;line-height:20px;color:#111;font-weight:bold;left:393px;">Poznámka</div>
<div class="t" style="top:575px;font-size:12.22px;line-height:20px;color:#111;font-weight:bold;left:-506.4px;width:1200px;text-align:right;">Stav skl. MJ1</div>
<div class="t" style="top:575px;font-size:12.22px;line-height:20px;color:#111;font-weight:bold;left:-421.5px;width:1200px;text-align:right;">Rezerv. MJ1</div>
<div class="t" style="top:575px;font-size:12.39px;line-height:20px;color:#111;font-weight:bold;left:-337.9px;width:1200px;text-align:right;">Stav sk. MJ2</div>
<div class="t" style="top:575px;font-size:12.45px;line-height:20px;color:#111;font-weight:bold;left:-252px;width:1200px;text-align:right;">Rezerv. MJ2</div>
<div class="a" style="left:10px;top:593px;width:1512px;height:21px;background:#0d62d0;"></div>
<div class="a" style="left:32px;top:594px;width:188px;height:19px;border:1px solid #6f9be0;box-sizing:border-box;"></div>
<div class="t" style="top:595px;font-size:12.5px;line-height:20px;color:#fff;left:34px;">T 456</div>
<div class="a" style="left:222px;top:594px;width:83px;height:19px;border:1px solid #6f9be0;box-sizing:border-box;"></div>
<div class="t" style="top:595px;font-size:12.5px;line-height:20px;color:#fff;left:-896.5px;width:1200px;text-align:right;">108,00</div>
<div class="a" style="left:307px;top:594px;width:82px;height:19px;border:1px solid #6f9be0;box-sizing:border-box;"></div>
<div class="t" style="top:595px;font-size:12.5px;line-height:20px;color:#fff;left:-812.5px;width:1200px;text-align:right;">0,00</div>
<div class="a" style="left:391px;top:594px;width:217px;height:19px;border:1.5px solid #0a1f44;box-sizing:border-box;"></div>
<div class="a" style="left:611px;top:594px;width:82px;height:19px;border:1px solid #6f9be0;box-sizing:border-box;"></div>
<div class="t" style="top:595px;font-size:12.5px;line-height:20px;color:#fff;left:-508.5px;width:1200px;text-align:right;">9,00</div>
<div class="a" style="left:696px;top:594px;width:83px;height:19px;border:1px solid #6f9be0;box-sizing:border-box;"></div>
<div class="t" style="top:595px;font-size:12.5px;line-height:20px;color:#fff;left:-422.5px;width:1200px;text-align:right;">0,00</div>
<div class="a" style="left:781px;top:594px;width:82px;height:19px;border:1px solid #6f9be0;box-sizing:border-box;"></div>
<div class="t" style="top:595px;font-size:12.5px;line-height:20px;color:#fff;left:-338.5px;width:1200px;text-align:right;">90,00</div>
<div class="a" style="left:866px;top:594px;width:83px;height:19px;border:1px solid #6f9be0;box-sizing:border-box;"></div>
<div class="t" style="top:595px;font-size:12.5px;line-height:20px;color:#fff;left:-252.5px;width:1200px;text-align:right;">0,00</div>
<div class="a" style="left:1522px;top:568px;width:1px;height:68px;background:#6e6e6e;"></div>
<div class="a" style="left:1523px;top:568px;width:3px;height:68px;background:#ffffff;"></div>
<div class="a" style="left:1685px;top:568px;width:1px;height:68px;background:#a0a0a0;"></div>
<div class="t" style="top:578px;font-size:12.54px;line-height:20px;color:#111;font-weight:bold;left:1535.4px;">Zbytky v ŘP celkem:</div>
<div class="a" style="left:1589px;top:598px;width:75px;height:18px;background:#f0f0f0;border:1px solid #a0a0a0;box-sizing:border-box;"></div>
<div class="t" style="top:599px;font-size:12.5px;line-height:20px;color:#000;left:461.5px;width:1200px;text-align:right;">10,80</div>
<div class="a" style="left:1690px;top:171px;width:1px;height:465px;background:#a0a0a0;"></div>
<div class="a" style="left:1691px;top:171px;width:4px;height:465px;background:#f0f0f0;"></div>
</body></html>
